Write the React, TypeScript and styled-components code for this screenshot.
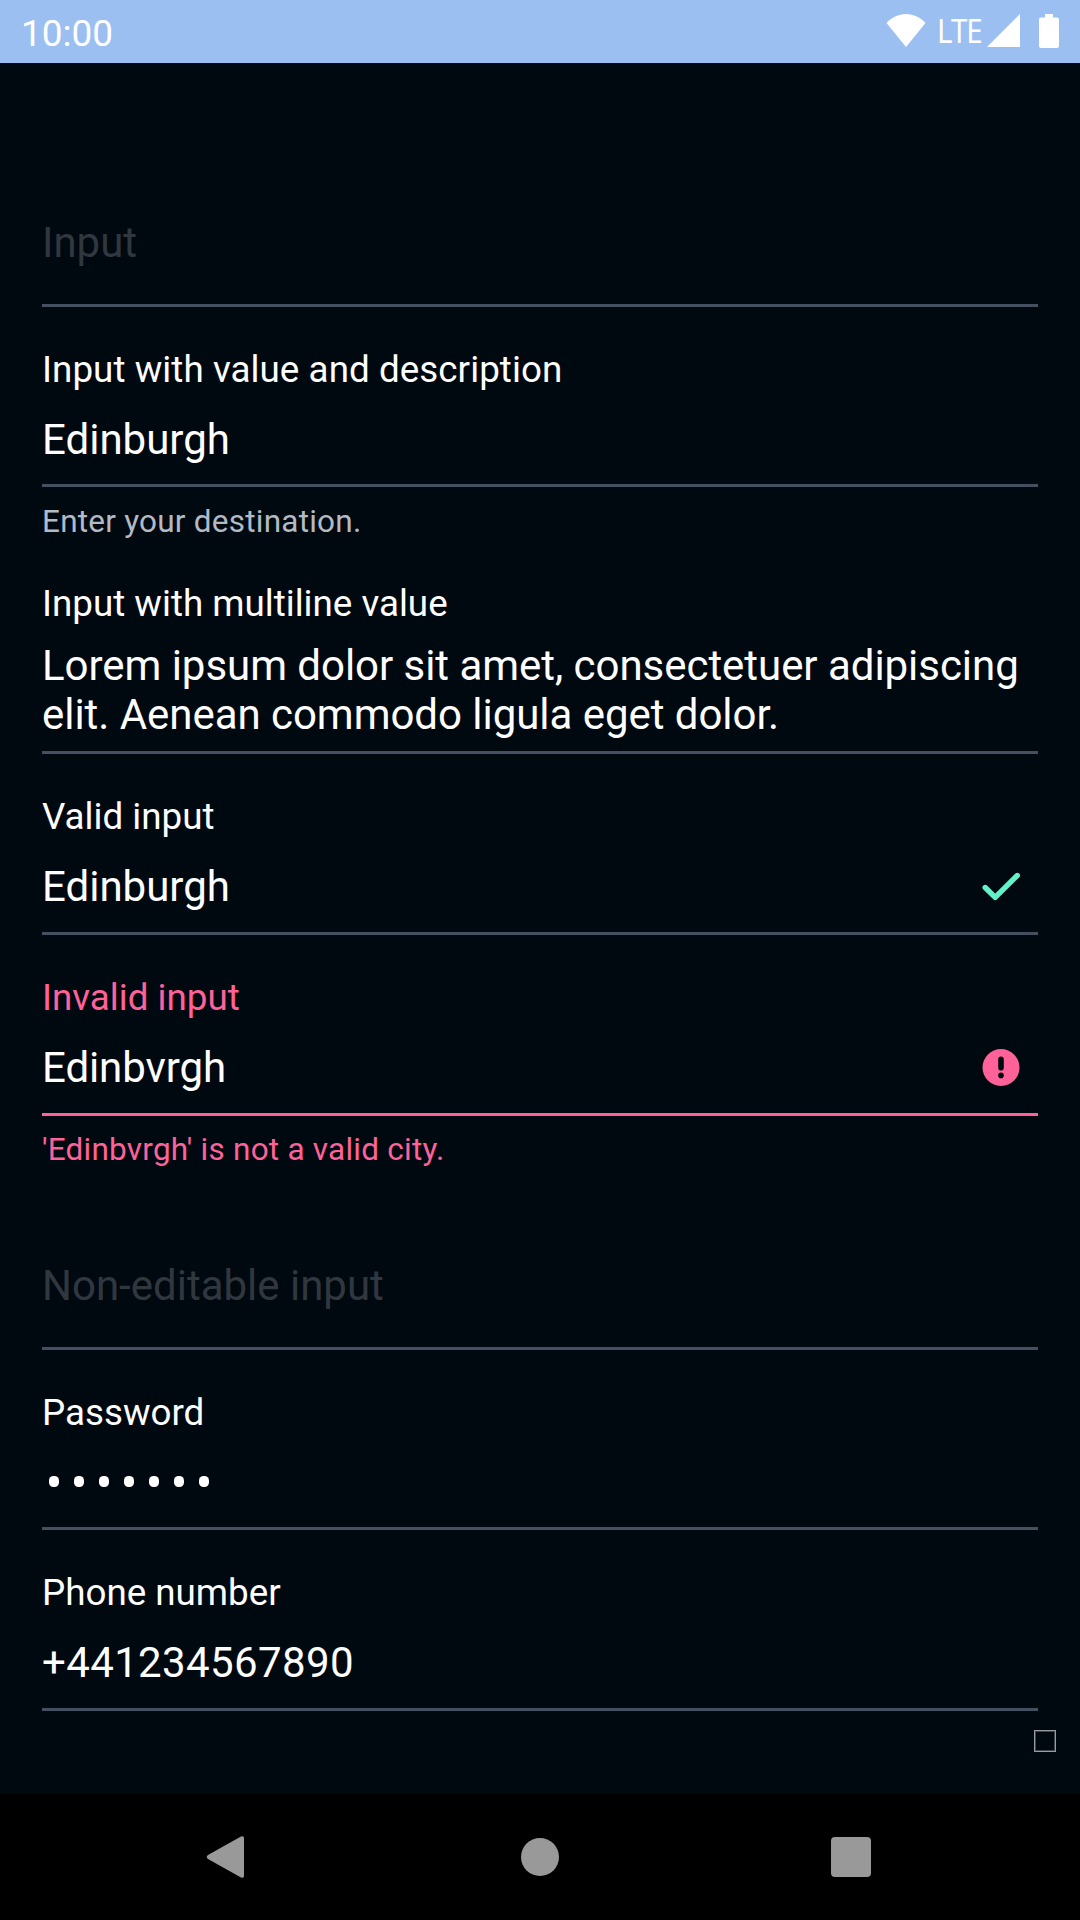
import React from 'react';
import styled, { createGlobalStyle } from 'styled-components';

const GlobalStyle = createGlobalStyle`
  * { box-sizing: border-box; }
  body { margin: 0; background: #000810; }
`;

const Screen = styled.div`
  display: flex;
  flex-direction: column;
  width: 1080px;
  height: 1920px;
  overflow: hidden;
  background: #000810;
  color: #fff;
  font-family: Roboto, sans-serif;
`;

const StatusBar = styled.header`
  display: flex;
  align-items: flex-start;
  justify-content: space-between;
  height: 63px;
  padding: 0 21px;
  background: #9cbff2;
`;

const Clock = styled.time`
  padding-top: 11px;
  font-size: 37px;
  line-height: 45px;
`;

const StatusIcons = styled.div`
  display: flex;
  align-items: flex-start;
  padding-top: 14px;
`;

const WifiIcon = styled.svg`
  width: 40px;
  height: 33px;
`;

const Network = styled.span`
  width: 47px;
  margin: 0 3px 0 11px;
  font-family: "Noto Sans", sans-serif;
  font-size: 32px;
  line-height: 34px;
  letter-spacing: -1px;
  transform: scaleX(0.92);
  transform-origin: left;
`;

const SignalIcon = styled.svg`
  width: 33px;
  height: 33px;
  margin-right: 19px;
`;

const BatteryIcon = styled.svg`
  width: 20px;
  height: 34px;
`;

const Form = styled.main`
  display: flex;
  flex-direction: column;
  flex: 1;
  padding: 155px 42px 0;
`;

const Field = styled.div<{ $top?: number }>`
  display: flex;
  flex-direction: column;
  padding-top: ${(p) => p.$top ?? 41}px;
`;

const Label = styled.label<{ $invalid?: boolean; $tracking?: number }>`
  font-size: 36.75px;
  line-height: 43px;
  letter-spacing: ${(p) => p.$tracking ?? 0}px;
  color: ${(p) => (p.$invalid ? '#ff6199' : '#fff')};
`;

const ValueRow = styled.div<{ $top?: number; $bottom: number; $invalid?: boolean }>`
  display: flex;
  align-items: center;
  justify-content: space-between;
  padding: ${(p) => p.$top ?? 24}px 18px ${(p) => p.$bottom}px 0;
  border-bottom: 3px solid ${(p) => (p.$invalid ? '#ff6199' : '#444f60')};
`;

const Value = styled.span<{ $hint?: boolean; $tracking?: number }>`
  font-size: 42px;
  line-height: 49px;
  letter-spacing: ${(p) => p.$tracking ?? 0}px;
  white-space: pre;
  color: ${(p) => (p.$hint ? '#31373f' : '#fff')};
`;

const Dots = styled.div`
  display: flex;
  align-items: flex-start;
  gap: 15px;
  height: 49px;
  padding: 18px 0 0 7px;
`;

const Dot = styled.i`
  width: 10px;
  height: 11px;
  border-radius: 4.5px;
  background: #fff;
`;

const Description = styled.p<{ $top: number; $invalid?: boolean }>`
  margin: ${(p) => p.$top}px 0 0;
  font-size: 31.5px;
  line-height: 37px;
  letter-spacing: 0.23px;
  color: ${(p) => (p.$invalid ? '#ff6199' : '#b2bac4')};
`;

const StateIcon = styled.svg`
  width: 38px;
  height: 38px;
`;

const ToggleBox = styled.span`
  align-self: flex-end;
  width: 22px;
  height: 22px;
  margin: 19px -18px 0 0;
  border: 1px solid #999da1;
  box-shadow: inset 0 0 0 1px #40464c;
`;

const NavBar = styled.nav`
  display: grid;
  grid-template-columns: 314px 310px 42px;
  align-items: center;
  height: 126px;
  padding-left: 206px;
  background: #000;
`;

const NavIcon = styled.svg`
  width: 42px;
  height: 44px;
`;

const Check = () => (
  <StateIcon viewBox="0 0 38 38">
    <path d="M3.2 19.500 13.200 29.400 35.300 7.500" fill="none" stroke="#61f2c9" strokeWidth="5.4" strokeLinecap="round" strokeLinejoin="round" />
  </StateIcon>
);

const Alert = () => (
  <StateIcon viewBox="0 0 38 38">
    <circle cx="19" cy="18.5" r="18.5" fill="#ff6199" />
    <rect x="16.2" y="7.5" width="5.6" height="14" rx="2.8" fill="#000810" />
    <circle cx="19" cy="26.4" r="2.8" fill="#000810" />
  </StateIcon>
);

export default function App() {
  return (
    <Screen>
      <GlobalStyle />
      <StatusBar>
        <Clock>10:00</Clock>
        <StatusIcons>
          <WifiIcon viewBox="0 0 40 33">
            <path d="M20 33 .5 9C5.500 3.600 12.500 0 20 0s14.500 3.600 19.500 9z" fill="#fff" />
          </WifiIcon>
          <Network>LTE</Network>
          <SignalIcon viewBox="0 0 33 33">
            <path d="M0 33 33 0v33z" fill="#fff" />
          </SignalIcon>
          <BatteryIcon viewBox="0 0 20 34">
            <path d="M6 0h8v3.500h4a2 2 0 0 1 2 2V32a2 2 0 0 1-2 2H2a2 2 0 0 1-2-2V5.500a2 2 0 0 1 2-2h4z" fill="#fff" />
          </BatteryIcon>
        </StatusIcons>
      </StatusBar>

      <Form>
        <Field $top={0}>
          <ValueRow $top={0} $bottom={37}><Value $hint>Input</Value></ValueRow>
        </Field>
        <Field>
          <Label $tracking={0.06}>Input with value and description</Label>
          <ValueRow $bottom={20}><Value>Edinburgh</Value></ValueRow>
          <Description $top={16}>Enter your destination.</Description>
        </Field>
        <Field $top={42}>
          <Label>Input with multiline value</Label>
          <ValueRow $top={16} $bottom={12}>
            <Value $tracking={-0.04}>{'Lorem ipsum dolor sit amet, consectetuer adipiscing\nelit. Aenean commodo ligula eget dolor.'}</Value>
          </ValueRow>
        </Field>
        <Field>
          <Label>Valid input</Label>
          <ValueRow $bottom={21}><Value>Edinburgh</Value><Check /></ValueRow>
        </Field>
        <Field>
          <Label $invalid>Invalid input</Label>
          <ValueRow $bottom={21} $invalid><Value $tracking={-0.1}>Edinbvrgh</Value><Alert /></ValueRow>
          <Description $top={15} $invalid>'Edinbvrgh' is not a valid city.</Description>
        </Field>
        <Field $top={93}>
          <ValueRow $top={0} $bottom={37}><Value $hint>Non-editable input</Value></ValueRow>
        </Field>
        <Field>
          <Label>Password</Label>
          <ValueRow $bottom={20}>
            <Dots>{Array.from({ length: 7 }, (_, i) => <Dot key={i} />)}</Dots>
          </ValueRow>
        </Field>
        <Field>
          <Label>Phone number</Label>
          <ValueRow $bottom={21}><Value $tracking={0.37}>+441234567890</Value></ValueRow>
        </Field>
        <ToggleBox />
      </Form>

      <NavBar>
        <NavIcon viewBox="0 0 42 44">
          <path d="M2 20 35 1.500Q38 .5 38 3v38q0 2.500-3 1.500L2 24Q-.5 22 2 20z" fill="#999" />
        </NavIcon>
        <NavIcon viewBox="0 0 42 44">
          <circle cx="20" cy="22" r="19" fill="#999" />
        </NavIcon>
        <NavIcon viewBox="0 0 42 44">
          <rect x="1" y="2" width="40" height="40" rx="4" fill="#999" />
        </NavIcon>
      </NavBar>
    </Screen>
  );
}
